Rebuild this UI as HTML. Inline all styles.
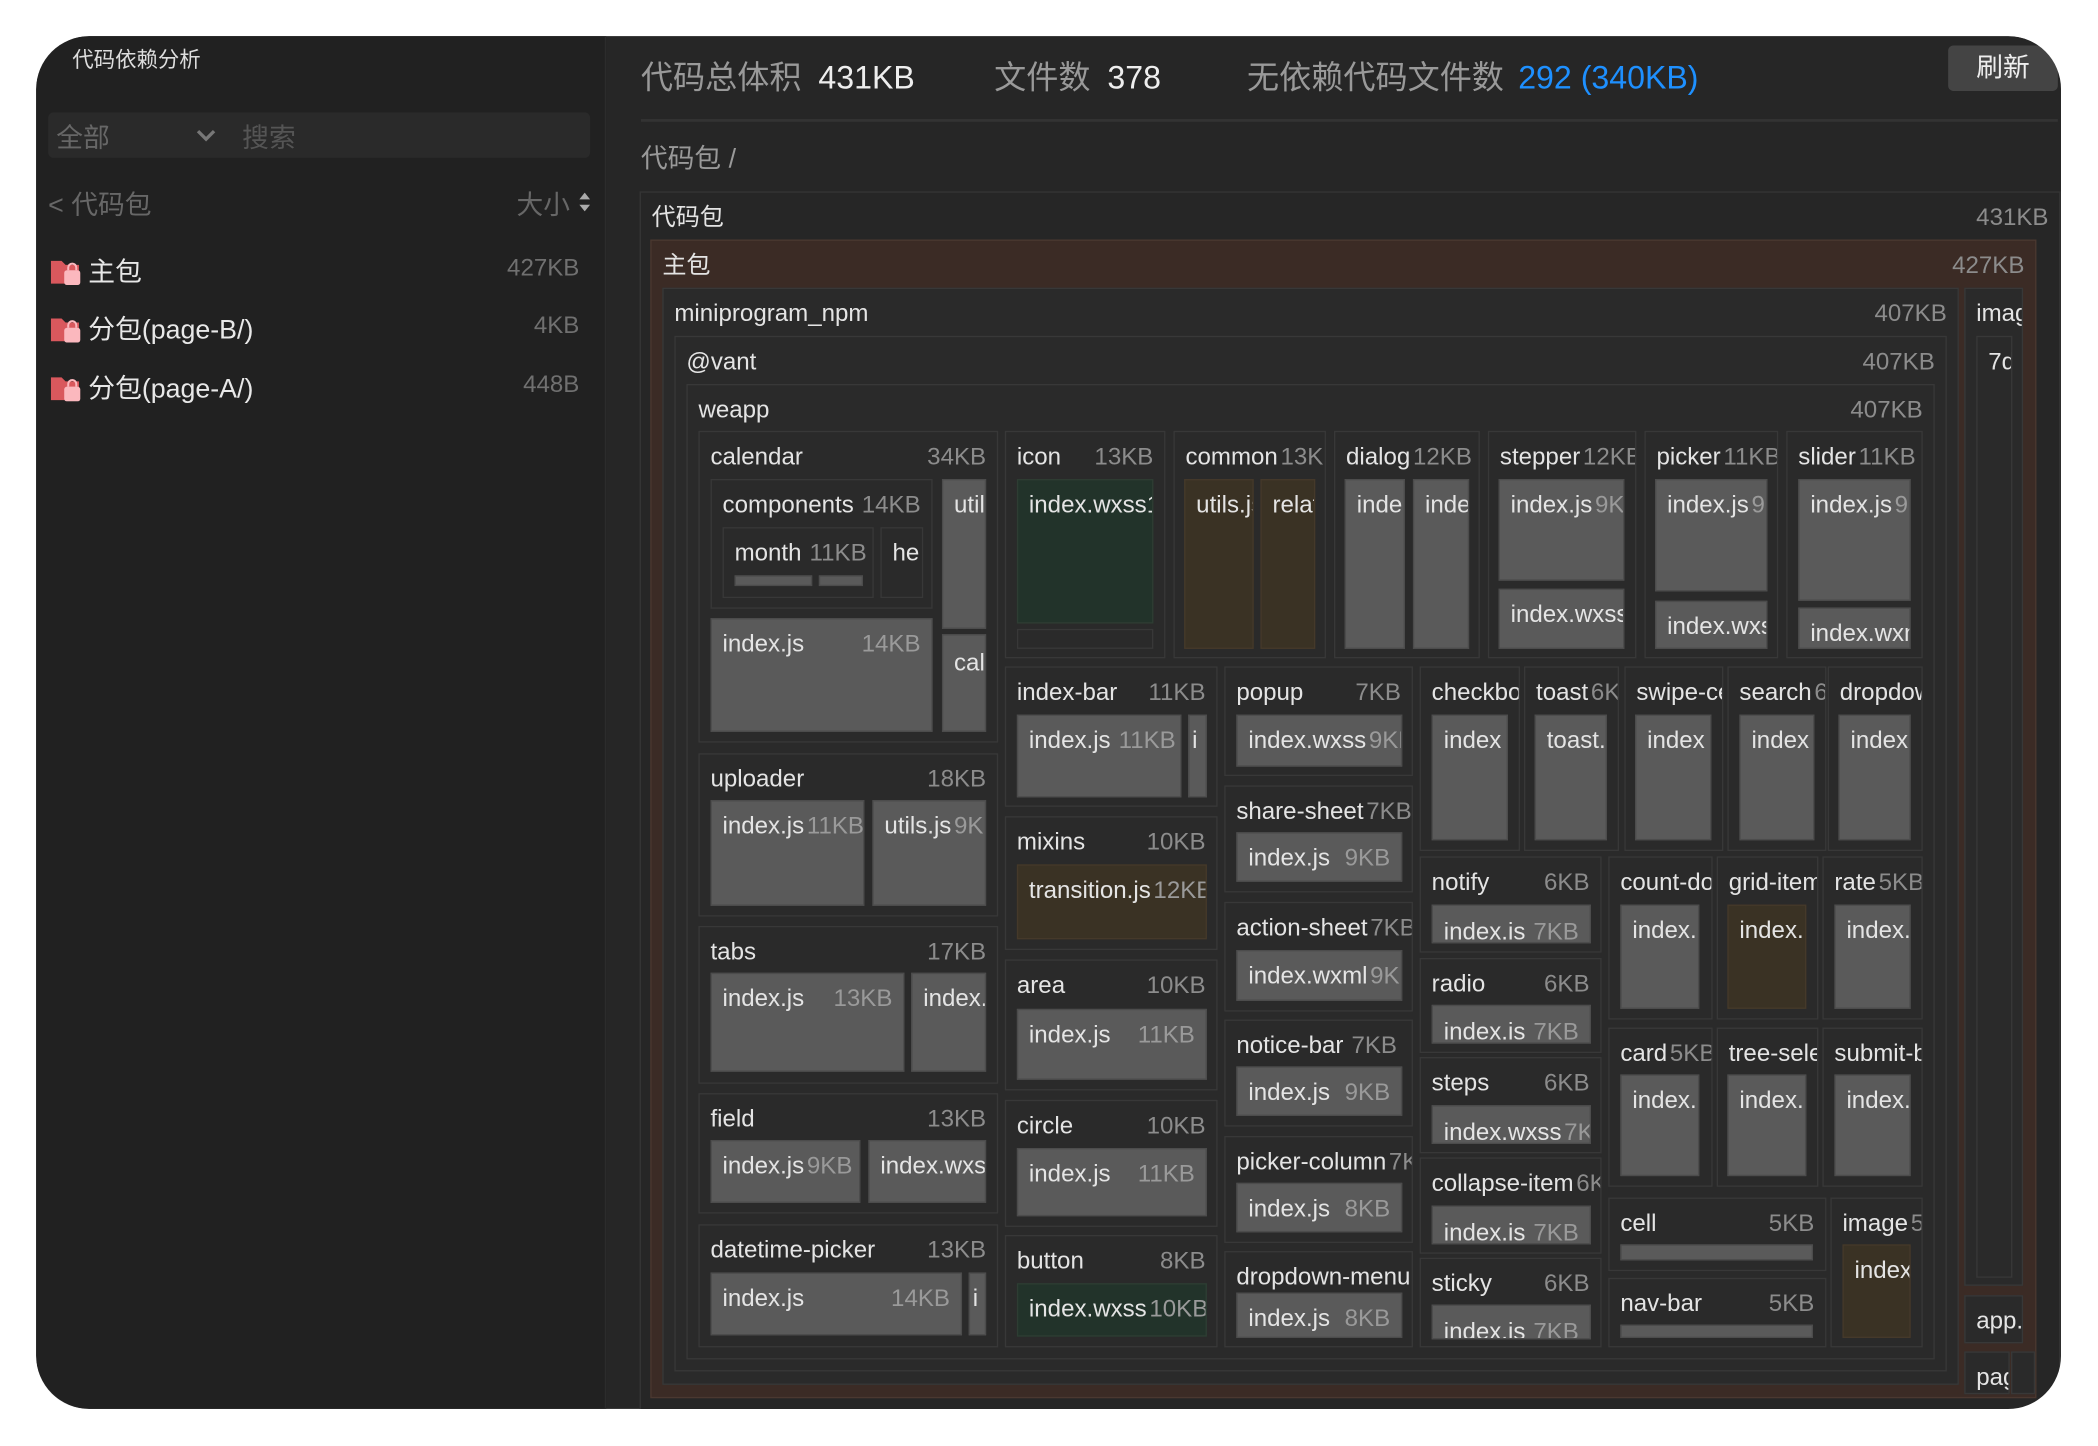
<!DOCTYPE html>
<html><head><meta charset="utf-8"><style>
*{margin:0;padding:0;box-sizing:border-box}
html,body{width:2098px;height:1446px;overflow:hidden;background:#fff}
body{font-family:"Liberation Sans","Noto Sans CJK SC",sans-serif}
#w{position:absolute;left:0;top:0;width:1568px;height:1081px;transform:scale(1.33801);transform-origin:0 0}
#win{position:absolute;left:27px;top:27px;width:1514px;height:1026px;border-radius:40px;background:#262626;overflow:hidden;box-shadow:0 6px 24px rgba(0,0,0,.35)}
#side{position:absolute;left:0;top:0;width:426px;height:1026px;background:#212121;border-right:1px solid #2c2c2c}
.a{position:absolute;white-space:nowrap}
.g,.l{position:absolute;display:flex;overflow:hidden;white-space:nowrap;font-size:18px;line-height:20px;padding:8px 8px 0 8px;color:#e4e4e4}
.g{background:#2a2a2a;border:1px solid #383838}
.l{background:#5a5a5a;border:1px solid #4c4c4c}
.gr{background:#22332a;border:1px solid #2e3d33}
.br{background:#3a3224;border:1px solid #45392a}
.g i,.l i{font-style:normal;color:#8c8c8c;margin-left:auto;padding-left:2px}
.l i{color:#9a9a9a}
.fx i{margin-left:4px}
</style></head><body><div id="w">
<div id="win">
<div id="side">
<div class="a" style="left:27px;top:4px;font-size:16px;color:#ddd">代码依赖分析</div>
<div class="a" style="left:9px;top:57px;width:405px;height:34px;background:#2a2a2a;border-radius:4px"></div>
<div class="a" style="left:15px;top:60px;font-size:20px;color:#676767">全部</div>
<svg class="a" style="left:119px;top:68px" width="16" height="12"><path d="M2 3 L8 9 L14 3" stroke="#777" stroke-width="2.5" fill="none"/></svg>
<div class="a" style="left:154px;top:60px;font-size:20px;color:#555">搜索</div>
<div class="a" style="left:9px;top:110px;font-size:20px;color:#676767">&lt; 代码包</div>
<div class="a" style="left:359px;top:110px;font-size:20px;color:#676767">大小</div>
<svg class="a" style="left:405px;top:117px" width="10" height="14"><path d="M1 5 L5 0 L9 5Z M1 9 L5 14 L9 9Z" fill="#aaa"/></svg>
<svg class="a" style="left:11px;top:166px" width="23" height="20"><path d="M0 2 h8 l3 3 h10 v14 h-21z" fill="#d9585d"/><rect x="10" y="9" width="12" height="11" rx="2" fill="#fbb8be"/><path d="M13 9 v-2 a3 3 0 0 1 6 0 v2" stroke="#fbb8be" stroke-width="1.5" fill="none"/></svg>
<div class="a" style="left:39px;top:160px;font-size:20px;color:#e8e8e8">主包</div>
<div class="a" style="right:19px;top:163px;font-size:18px;color:#707070">427KB</div>
<svg class="a" style="left:11px;top:209px" width="23" height="20"><path d="M0 2 h8 l3 3 h10 v14 h-21z" fill="#d9585d"/><rect x="10" y="9" width="12" height="11" rx="2" fill="#fbb8be"/><path d="M13 9 v-2 a3 3 0 0 1 6 0 v2" stroke="#fbb8be" stroke-width="1.5" fill="none"/></svg>
<div class="a" style="left:39px;top:203px;font-size:20px;color:#e8e8e8">分包(page-B/)</div>
<div class="a" style="right:19px;top:206px;font-size:18px;color:#707070">4KB</div>
<svg class="a" style="left:11px;top:253px" width="23" height="20"><path d="M0 2 h8 l3 3 h10 v14 h-21z" fill="#d9585d"/><rect x="10" y="9" width="12" height="11" rx="2" fill="#fbb8be"/><path d="M13 9 v-2 a3 3 0 0 1 6 0 v2" stroke="#fbb8be" stroke-width="1.5" fill="none"/></svg>
<div class="a" style="left:39px;top:247px;font-size:20px;color:#e8e8e8">分包(page-A/)</div>
<div class="a" style="right:19px;top:250px;font-size:18px;color:#707070">448B</div>
</div>
</div>
<div class="a" style="left:479px;top:38px;font-size:24px;color:#999">代码总体积 <span style="color:#eee;margin-left:6px">431KB</span></div>
<div class="a" style="left:743px;top:38px;font-size:24px;color:#999">文件数 <span style="color:#eee;margin-left:6px">378</span></div>
<div class="a" style="left:932px;top:38px;font-size:24px;color:#999">无依赖代码文件数 <span style="color:#1e90ff;margin-left:4px">292 (340KB)</span></div>
<div class="a" style="left:1456px;top:34px;width:82px;height:34px;background:#444;border-radius:4px;font-size:20px;color:#eee;text-align:center;line-height:34px">刷新</div>
<div class="a" style="left:479px;top:89px;width:1059px;height:2px;background:#333"></div>
<div class="a" style="left:479px;top:102px;font-size:20px;color:#999">代码包 /</div>

<div class="g" style="left:478px;top:143px;width:1062px;height:920px;background:#262626;border-color:#353535"><b style="font-weight:normal">代码包</b><i>431KB</i></div>
<div class="g" style="left:486px;top:179px;width:1036px;height:866px;background:#3b2b25;border-color:#4a3830"><b style="font-weight:normal">主包</b><i>427KB</i></div>
<div class="g" style="left:495px;top:215px;width:969px;height:820px"><b style="font-weight:normal">miniprogram_npm</b><i>407KB</i></div>
<div class="g" style="left:1468px;top:215px;width:44px;height:746px">imag</div>
<div class="g" style="left:1477px;top:251px;width:27px;height:704px">7d</div>
<div class="g" style="left:1468px;top:968px;width:44px;height:36px">app.</div>
<div class="g" style="left:1468px;top:1010px;width:34px;height:32px">pag</div>
<div class="g" style="left:1503px;top:1010px;width:9px;height:32px"></div>
<div class="g" style="left:504px;top:251px;width:951px;height:774px"><b style="font-weight:normal">@vant</b><i>407KB</i></div>
<div class="g" style="left:513px;top:287px;width:933px;height:729px"><b style="font-weight:normal">weapp</b><i>407KB</i></div>

<div class="g" style="left:522px;top:322px;width:224px;height:233px">calendar<i>34KB</i></div>
<div class="g fx" style="left:531px;top:358px;width:166px;height:97px">components<i>14KB</i></div>
<div class="g fx" style="left:540px;top:394px;width:113px;height:53px">month<i>11KB</i></div>
<div class="l" style="left:549px;top:430px;width:58px;height:8px;padding:0"></div>
<div class="l" style="left:612px;top:430px;width:33px;height:8px;padding:0"></div>
<div class="g" style="left:658px;top:394px;width:32px;height:53px">he</div>
<div class="l" style="left:704px;top:358px;width:33px;height:112px">util</div>
<div class="l" style="left:531px;top:462px;width:166px;height:85px">index.js<i>14KB</i></div>
<div class="l" style="left:704px;top:474px;width:33px;height:73px;padding-top:10px">cal</div>

<div class="g" style="left:522px;top:563px;width:224px;height:122px">uploader<i>18KB</i></div>
<div class="l fx" style="left:531px;top:598px;width:115px;height:79px">index.js<i style="margin-left:0">11KB</i></div>
<div class="l fx" style="left:652px;top:598px;width:85px;height:79px">utils.js<i style="margin-left:0">9KB</i></div>
<div class="g" style="left:522px;top:692px;width:224px;height:118px">tabs<i>17KB</i></div>
<div class="l" style="left:531px;top:727px;width:145px;height:74px">index.js<i>13KB</i></div>
<div class="l" style="left:681px;top:727px;width:56px;height:74px">index.</div>
<div class="g" style="left:522px;top:817px;width:224px;height:90px">field<i>13KB</i></div>
<div class="l fx" style="left:531px;top:852px;width:112px;height:47px">index.js<i style="margin-left:0">9KB</i></div>
<div class="l" style="left:649px;top:852px;width:88px;height:47px">index.wxs</div>
<div class="g" style="left:522px;top:915px;width:224px;height:92px">datetime-picker<i>13KB</i></div>
<div class="l" style="left:531px;top:951px;width:188px;height:47px">index.js<i>14KB</i></div>
<div class="l" style="left:724px;top:951px;width:13px;height:47px;padding:8px 2px">i</div>

<div class="g" style="left:751px;top:322px;width:120px;height:170px">icon<i>13KB</i></div>
<div class="l gr" style="left:760px;top:358px;width:102px;height:108px">index.wxss1</div>
<div class="g" style="left:760px;top:470px;width:102px;height:15px"></div>
<div class="g fx" style="left:877px;top:322px;width:114px;height:170px">common<i style="margin-left:0">13KB</i></div>
<div class="l br" style="left:885px;top:358px;width:52px;height:127px">utils.js</div>
<div class="l br" style="left:942px;top:358px;width:41px;height:127px">relat</div>
<div class="g fx" style="left:997px;top:322px;width:109px;height:170px">dialog<i style="margin-left:0">12KB</i></div>
<div class="l" style="left:1005px;top:358px;width:45px;height:127px">inde</div>
<div class="l" style="left:1056px;top:358px;width:42px;height:127px">inde</div>
<div class="g fx" style="left:1112px;top:322px;width:111px;height:170px">stepper<i style="margin-left:0">12KB</i></div>
<div class="l fx" style="left:1120px;top:358px;width:94px;height:76px">index.js<i style="margin-left:0">9KB</i></div>
<div class="l" style="left:1120px;top:440px;width:94px;height:45px">index.wxss</div>
<div class="g fx" style="left:1229px;top:322px;width:100px;height:170px">picker<i style="margin-left:0">11KB</i></div>
<div class="l fx" style="left:1237px;top:358px;width:84px;height:84px">index.js<i style="margin-left:0">9</i></div>
<div class="l" style="left:1237px;top:449px;width:84px;height:36px">index.wxs</div>
<div class="g fx" style="left:1335px;top:322px;width:102px;height:170px">slider<i style="margin-left:0">11KB</i></div>
<div class="l fx" style="left:1344px;top:358px;width:84px;height:91px">index.js<i style="margin-left:0">9</i></div>
<div class="l" style="left:1344px;top:454px;width:84px;height:31px">index.wxml</div>

<div class="g" style="left:751px;top:498px;width:159px;height:105px">index-bar<i>11KB</i></div>
<div class="l fx" style="left:760px;top:534px;width:123px;height:62px">index.js<i>11KB</i></div>
<div class="l" style="left:888px;top:534px;width:14px;height:62px;padding:8px 2px">i</div>
<div class="g" style="left:751px;top:610px;width:159px;height:100px">mixins<i>10KB</i></div>
<div class="l br fx" style="left:760px;top:646px;width:142px;height:56px">transition.js<i style="margin-left:0">12KB</i></div>
<div class="g" style="left:751px;top:717px;width:159px;height:98px">area<i>10KB</i></div>
<div class="l" style="left:760px;top:754px;width:142px;height:53px">index.js<i>11KB</i></div>
<div class="g" style="left:751px;top:822px;width:159px;height:95px">circle<i>10KB</i></div>
<div class="l" style="left:760px;top:858px;width:142px;height:51px">index.js<i>11KB</i></div>
<div class="g" style="left:751px;top:923px;width:159px;height:84px">button<i>8KB</i></div>
<div class="l gr fx" style="left:760px;top:959px;width:142px;height:40px">index.wxss<i style="margin-left:0">10KB</i></div>

<div class="g" style="left:915px;top:498px;width:141px;height:82px">popup<i>7KB</i></div>
<div class="l fx" style="left:924px;top:534px;width:124px;height:39px">index.wxss<i style="margin-left:0">9KB</i></div>
<div class="g fx" style="left:915px;top:587px;width:141px;height:80px">share-sheet<i style="margin-left:0">7KB</i></div>
<div class="l" style="left:924px;top:622px;width:124px;height:37px">index.js<i>9KB</i></div>
<div class="g fx" style="left:915px;top:674px;width:141px;height:82px">action-sheet<i style="margin-left:0">7KB</i></div>
<div class="l fx" style="left:924px;top:710px;width:124px;height:38px">index.wxml<i style="margin-left:0">9KB</i></div>
<div class="g fx" style="left:915px;top:762px;width:141px;height:80px">notice-bar<i>7KB</i></div>
<div class="l" style="left:924px;top:797px;width:124px;height:37px">index.js<i>9KB</i></div>
<div class="g fx" style="left:915px;top:849px;width:141px;height:80px">picker-column<i style="margin-left:0">7KB</i></div>
<div class="l" style="left:924px;top:884px;width:124px;height:37px">index.js<i>8KB</i></div>
<div class="g" style="left:915px;top:935px;width:141px;height:72px">dropdown-menu</div>
<div class="l" style="left:924px;top:966px;width:124px;height:34px">index.js<i>8KB</i></div>

<div class="g" style="left:1061px;top:498px;width:75px;height:138px">checkbox</div>
<div class="l" style="left:1070px;top:534px;width:57px;height:94px">index</div>
<div class="g fx" style="left:1139px;top:498px;width:71px;height:138px">toast<i style="margin-left:0">6KB</i></div>
<div class="l" style="left:1147px;top:534px;width:54px;height:94px">toast.</div>
<div class="g" style="left:1214px;top:498px;width:74px;height:138px">swipe-cell</div>
<div class="l" style="left:1222px;top:534px;width:57px;height:94px">index</div>
<div class="g fx" style="left:1291px;top:498px;width:74px;height:138px">search<i style="margin-left:0">6KB</i></div>
<div class="l" style="left:1300px;top:534px;width:56px;height:94px">index</div>
<div class="g" style="left:1366px;top:498px;width:71px;height:138px">dropdown</div>
<div class="l" style="left:1374px;top:534px;width:54px;height:94px">index</div>

<div class="g" style="left:1061px;top:640px;width:136px;height:72px">notify<i>6KB</i></div>
<div class="l" style="left:1070px;top:676px;width:119px;height:29px;padding-top:9px">index.is<i>7KB</i></div>
<div class="g" style="left:1061px;top:716px;width:136px;height:71px">radio<i>6KB</i></div>
<div class="l" style="left:1070px;top:751px;width:119px;height:29px;padding-top:9px">index.is<i>7KB</i></div>
<div class="g" style="left:1061px;top:790px;width:136px;height:72px">steps<i>6KB</i></div>
<div class="l fx" style="left:1070px;top:826px;width:119px;height:29px;padding-top:9px">index.wxss<i style="margin-left:0">7KB</i></div>
<div class="g fx" style="left:1061px;top:865px;width:136px;height:72px">collapse-item<i style="margin-left:0">6KB</i></div>
<div class="l" style="left:1070px;top:901px;width:119px;height:29px;padding-top:9px">index.is<i>7KB</i></div>
<div class="g" style="left:1061px;top:940px;width:136px;height:67px">sticky<i>6KB</i></div>
<div class="l" style="left:1070px;top:975px;width:119px;height:26px;padding-top:9px">index.is<i>7KB</i></div>

<div class="g" style="left:1202px;top:640px;width:78px;height:122px">count-down</div>
<div class="l" style="left:1211px;top:676px;width:59px;height:78px">index.</div>
<div class="g" style="left:1283px;top:640px;width:76px;height:122px">grid-item</div>
<div class="l br" style="left:1291px;top:676px;width:59px;height:78px">index.</div>
<div class="g fx" style="left:1362px;top:640px;width:75px;height:122px">rate<i style="margin-left:0">5KB</i></div>
<div class="l" style="left:1371px;top:676px;width:57px;height:78px">index.</div>
<div class="g fx" style="left:1202px;top:768px;width:78px;height:119px">card<i style="margin-left:0">5KB</i></div>
<div class="l" style="left:1211px;top:803px;width:59px;height:76px">index.</div>
<div class="g" style="left:1283px;top:768px;width:76px;height:119px">tree-select</div>
<div class="l" style="left:1291px;top:803px;width:59px;height:76px">index.</div>
<div class="g" style="left:1362px;top:768px;width:75px;height:119px">submit-bar</div>
<div class="l" style="left:1371px;top:803px;width:57px;height:76px">index.</div>

<div class="g" style="left:1202px;top:895px;width:163px;height:55px">cell<i>5KB</i></div>
<div class="l" style="left:1211px;top:930px;width:144px;height:12px;padding:0"></div>
<div class="g" style="left:1202px;top:955px;width:163px;height:52px">nav-bar<i>5KB</i></div>
<div class="l" style="left:1211px;top:990px;width:144px;height:10px;padding:0"></div>
<div class="g fx" style="left:1368px;top:895px;width:69px;height:112px">image<i style="margin-left:0">5KB</i></div>
<div class="l br" style="left:1377px;top:930px;width:51px;height:70px">index</div>
</div>
<div style="position:absolute;left:0;top:0;width:2098px;height:1446px;pointer-events:none;z-index:5">
<svg width="2098" height="1446" style="position:absolute;left:0;top:0"><path fill-rule="evenodd" fill="#fff" d="M0 0H2098V1446H0Z M89 36 H2008 a53 53 0 0 1 53 53 V1356 a53 53 0 0 1 -53 53 H89 a53 53 0 0 1 -53 -53 V89 a53 53 0 0 1 53 -53Z"/></svg>
</div>
</body></html>
